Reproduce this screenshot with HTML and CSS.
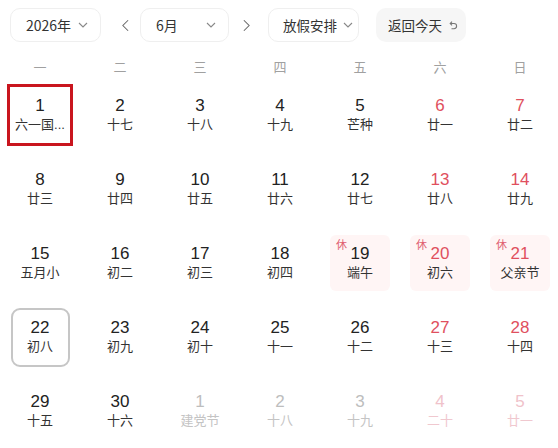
FILE: index.html
```html
<!DOCTYPE html>
<html lang="zh">
<head>
<meta charset="utf-8">
<link rel="stylesheet" href="styles.css">
</head>
<body>
<div class="toolbar">
  <div class="select year"><span>2026年</span><svg class="chev" viewBox="0 0 10 6"><polyline points="1,1 5,5 9,1"/></svg></div>
  <div class="arrow a1"><svg viewBox="0 0 8 14"><polyline points="7,1 1,7 7,13"/></svg></div>
  <div class="select month"><span>6月</span><svg class="chev" viewBox="0 0 10 6"><polyline points="1,1 5,5 9,1"/></svg></div>
  <div class="arrow a2"><svg viewBox="0 0 8 14"><polyline points="1,1 7,7 1,13"/></svg></div>
  <div class="select holiday"><span>放假安排</span><svg class="chev" viewBox="0 0 10 6"><polyline points="1,1 5,5 9,1"/></svg></div>
  <div class="today"><span>返回今天</span><svg class="back" viewBox="0 0 10 10"><path d="M2.5 3.5 H6 A2.6 2.6 0 0 1 6 8.7 H3.5"/><polyline points="4,1.6 2.2,3.5 4,5.4"/></svg></div>
</div>
<div class="weekdays">
  <div>一</div><div>二</div><div>三</div><div>四</div><div>五</div><div>六</div><div>日</div>
</div>
<div class="grid">
  <div class="cell"><div class="box marked"><div class="num">1</div><div class="lunar">六一国...</div></div></div>
  <div class="cell"><div class="box"><div class="num">2</div><div class="lunar">十七</div></div></div>
  <div class="cell"><div class="box"><div class="num">3</div><div class="lunar">十八</div></div></div>
  <div class="cell"><div class="box"><div class="num">4</div><div class="lunar">十九</div></div></div>
  <div class="cell"><div class="box"><div class="num">5</div><div class="lunar">芒种</div></div></div>
  <div class="cell"><div class="box wk"><div class="num">6</div><div class="lunar">廿一</div></div></div>
  <div class="cell"><div class="box wk"><div class="num">7</div><div class="lunar">廿二</div></div></div>

  <div class="cell"><div class="box"><div class="num">8</div><div class="lunar">廿三</div></div></div>
  <div class="cell"><div class="box"><div class="num">9</div><div class="lunar">廿四</div></div></div>
  <div class="cell"><div class="box"><div class="num">10</div><div class="lunar">廿五</div></div></div>
  <div class="cell"><div class="box"><div class="num">11</div><div class="lunar">廿六</div></div></div>
  <div class="cell"><div class="box"><div class="num">12</div><div class="lunar">廿七</div></div></div>
  <div class="cell"><div class="box wk"><div class="num">13</div><div class="lunar">廿八</div></div></div>
  <div class="cell"><div class="box wk"><div class="num">14</div><div class="lunar">廿九</div></div></div>

  <div class="cell"><div class="box"><div class="num">15</div><div class="lunar">五月小</div></div></div>
  <div class="cell"><div class="box"><div class="num">16</div><div class="lunar">初二</div></div></div>
  <div class="cell"><div class="box"><div class="num">17</div><div class="lunar">初三</div></div></div>
  <div class="cell"><div class="box"><div class="num">18</div><div class="lunar">初四</div></div></div>
  <div class="cell"><div class="box rest"><span class="tag">休</span><div class="num">19</div><div class="lunar">端午</div></div></div>
  <div class="cell"><div class="box rest wk"><span class="tag">休</span><div class="num">20</div><div class="lunar">初六</div></div></div>
  <div class="cell"><div class="box rest wk"><span class="tag">休</span><div class="num">21</div><div class="lunar">父亲节</div></div></div>

  <div class="cell"><div class="box today-cell"><div class="num">22</div><div class="lunar">初八</div></div></div>
  <div class="cell"><div class="box"><div class="num">23</div><div class="lunar">初九</div></div></div>
  <div class="cell"><div class="box"><div class="num">24</div><div class="lunar">初十</div></div></div>
  <div class="cell"><div class="box"><div class="num">25</div><div class="lunar">十一</div></div></div>
  <div class="cell"><div class="box"><div class="num">26</div><div class="lunar">十二</div></div></div>
  <div class="cell"><div class="box wk"><div class="num">27</div><div class="lunar">十三</div></div></div>
  <div class="cell"><div class="box wk"><div class="num">28</div><div class="lunar">十四</div></div></div>

  <div class="cell"><div class="box"><div class="num">29</div><div class="lunar">十五</div></div></div>
  <div class="cell"><div class="box"><div class="num">30</div><div class="lunar">十六</div></div></div>
  <div class="cell"><div class="box other"><div class="num">1</div><div class="lunar">建党节</div></div></div>
  <div class="cell"><div class="box other"><div class="num">2</div><div class="lunar">十八</div></div></div>
  <div class="cell"><div class="box other"><div class="num">3</div><div class="lunar">十九</div></div></div>
  <div class="cell"><div class="box other wk"><div class="num">4</div><div class="lunar">二十</div></div></div>
  <div class="cell"><div class="box other wk"><div class="num">5</div><div class="lunar">廿一</div></div></div>
</div>
</body>
</html>
```

FILE: styles.css
```css
html, body {
  margin: 0;
  padding: 0;
  background: #fff;
  overflow: hidden;
}
body {
  width: 558px;
  height: 448px;
  font-family: "Noto Sans CJK SC", "Liberation Sans", sans-serif;
  color: #333;
}
.toolbar {
  display: flex;
  align-items: center;
  padding: 8px 0 0 10px;
  height: 34px;
}
.select {
  box-sizing: border-box;
  height: 34px;
  border: 1px solid #efefef;
  border-radius: 10px;
  display: flex;
  align-items: center;
  justify-content: space-between;
  font-size: 14px;
  color: #333;
}
.year { width: 91px; padding: 0 12px 0 15px; }
.month { width: 89px; padding: 0 12px 0 15px; }
.holiday {
  width: 91px;
  padding: 0 0 0 14px;
  margin-left: 13px;
  justify-content: flex-start;
  gap: 6px;
  font-size: 13.5px;
}
.chev {
  width: 10px;
  height: 6px;
  fill: none;
  stroke: #888;
  stroke-width: 1.1;
}
.arrow {
  width: 18px;
  height: 34px;
  display: flex;
  align-items: center;
  justify-content: center;
}
.a1 { margin: 0 6px 0 15px; }
.a2 { margin-left: 8px; }
.arrow svg {
  width: 7px;
  height: 13px;
  fill: none;
  stroke: #666;
  stroke-width: 1.2;
}
.today {
  box-sizing: border-box;
  width: 90px;
  height: 34px;
  margin-left: 17px;
  border-radius: 10px;
  background: #f6f6f6;
  display: flex;
  align-items: center;
  padding: 0 0 0 12px;
  gap: 6px;
  font-size: 13.5px;
  color: #333;
}
.back {
  width: 10px;
  height: 10px;
  fill: none;
  stroke: #777;
  stroke-width: 1.1;
}
.weekdays {
  display: grid;
  grid-template-columns: repeat(7, 80px);
  margin-top: 12px;
  height: 24px;
  align-items: center;
  font-size: 13px;
  color: #a0a0a0;
  text-align: center;
}
.grid {
  display: grid;
  grid-template-columns: repeat(7, 80px);
  grid-auto-rows: 74px;
}
.cell {
  display: flex;
  align-items: center;
  justify-content: center;
}
.box {
  position: relative;
  box-sizing: border-box;
  width: 58px;
  height: 58px;
  border-radius: 8px;
  display: flex;
  flex-direction: column;
  align-items: center;
  justify-content: center;
}
.num {
  font-family: "Liberation Sans", Arial, sans-serif;
  font-size: 17px;
  line-height: 20px;
  color: #222;
}
.lunar {
  font-family: "Liberation Sans", "Noto Sans CJK SC", sans-serif;
  font-size: 13px;
  line-height: 18px;
  color: #333;
  white-space: nowrap;
}
.wk .num { color: #e0505e; }
.marked {
  width: 66px;
  height: 62px;
  border: 3px solid #c9151e;
  border-radius: 0;
}
.today-cell {
  width: 59px;
  height: 59px;
  border: 2px solid #c6c6c6;
  border-radius: 9px;
}
.rest {
  width: 60px;
  height: 56px;
  background: #fff5f5;
  border-radius: 6px;
}
.tag {
  position: absolute;
  left: 6px;
  top: 3px;
  font-size: 11px;
  line-height: 12px;
  color: #e06070;
}
.other .num { color: #bdbdbd; }
.other .lunar { color: #c4c4c4; }
.other.wk .num { color: #f0c2ca; }
.other.wk .lunar { color: #f0c8cf; }
```
